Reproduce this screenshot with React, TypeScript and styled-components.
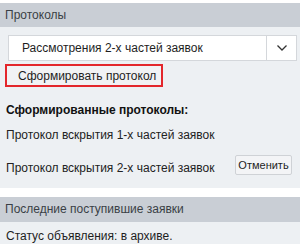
import styled, { createGlobalStyle } from "styled-components";

const GlobalStyle = createGlobalStyle`
  html, body {
    margin: 0;
    padding: 0;
    background: #ffffff;
  }
  body {
    font-family: "Liberation Sans", Arial, sans-serif;
    font-size: 12px;
    color: #222;
  }
`;

const Page = styled.div`
  width: 300px;
  padding-top: 3px;
  display: flex;
  flex-direction: column;
  gap: 9px;
`;

const Panel = styled.section`
  display: flex;
  flex-direction: column;
`;

const PanelHeader = styled.div<{ $h?: number }>`
  height: ${(p) => p.$h || 24}px;
  line-height: ${(p) => p.$h || 24}px;
  padding-left: 5px;
  background: #c9ced5;
  color: #3a3f45;
`;

const PanelBody = styled.div<{ $pad?: string }>`
  background: #edf0f3;
  padding: ${(p) => p.$pad || "8px 3px 12px 5px"};
  display: flex;
  flex-direction: column;
`;

const Select = styled.div`
  margin-left: 3px;
  height: 26px;
  box-sizing: border-box;
  border: 1px solid #d4d7db;
  background: #fff;
  display: flex;
  align-items: center;
`;

const SelectValue = styled.div`
  flex: 1;
  padding-left: 13px;
  color: #1e1e1e;
  white-space: nowrap;
`;

const SelectArrow = styled.div`
  width: 29px;
  height: 100%;
  border-left: 1px solid #d4d7db;
  display: flex;
  align-items: center;
  justify-content: center;
`;

const PrimaryButton = styled.button`
  margin-top: 3px;
  align-self: flex-start;
  width: 158px;
  height: 23px;
  box-sizing: border-box;
  border: 2px solid #e3262b;
  background: #f1f2f4;
  font: inherit;
  color: #1e1e1e;
  padding: 0 0 0 11px;
  text-align: left;
  white-space: nowrap;
`;

const Heading = styled.div`
  margin-top: 14px;
  height: 18px;
  line-height: 18px;
  padding-left: 1px;
  font-weight: bold;
  color: #111;
`;

const Row = styled.div<{ $gap: number }>`
  display: flex;
  align-items: center;
  justify-content: space-between;
  min-height: 22px;
  margin-top: ${(p) => p.$gap}px;
  padding-left: 1px;
`;

const RowLabel = styled.span<{ $shift?: number }>`
  margin-top: ${(p) => p.$shift || 0}px;
  white-space: nowrap;
`;

const SmallButton = styled.button`
  height: 20px;
  width: 57px;
  box-sizing: border-box;
  border: 1px solid #cfd2d6;
  border-radius: 2px;
  background: #f3f4f6;
  font: inherit;
  font-size: 11px;
  color: #1e1e1e;
  padding: 0;
  margin-right: 5px;
  white-space: nowrap;
`;

const StatusText = styled.div`
  height: 21px;
  line-height: 21px;
  padding-left: 1px;
  color: #1e1e1e;
`;

const Chevron = () => (
  <svg width="12" height="8" viewBox="0 0 12 8">
    <polyline
      points="1.5,1.5 6,6 10.5,1.5"
      fill="none"
      stroke="#333"
      strokeWidth="1.3"
    />
  </svg>
);

export default function App() {
  return (
    <>
      <GlobalStyle />
      <Page>
        <Panel>
          <PanelHeader>Протоколы</PanelHeader>
          <PanelBody>
            <Select>
              <SelectValue>Рассмотрения 2-х частей заявок</SelectValue>
              <SelectArrow>
                <Chevron />
              </SelectArrow>
            </Select>
            <PrimaryButton>Сформировать протокол</PrimaryButton>
            <Heading>Сформированные протоколы:</Heading>
            <Row $gap={5}>
              <RowLabel>Протокол вскрытия 1-х частей заявок</RowLabel>
            </Row>
            <Row $gap={8}>
              <RowLabel $shift={6}>Протокол вскрытия 2-х частей заявок</RowLabel>
              <SmallButton>Отменить</SmallButton>
            </Row>
          </PanelBody>
        </Panel>
        <Panel>
          <PanelHeader $h={25}>Последние поступившие заявки</PanelHeader>
          <PanelBody $pad="4px 3px 0 5px">
            <StatusText>Статус объявления: в архиве.</StatusText>
          </PanelBody>
        </Panel>
      </Page>
    </>
  );
}
